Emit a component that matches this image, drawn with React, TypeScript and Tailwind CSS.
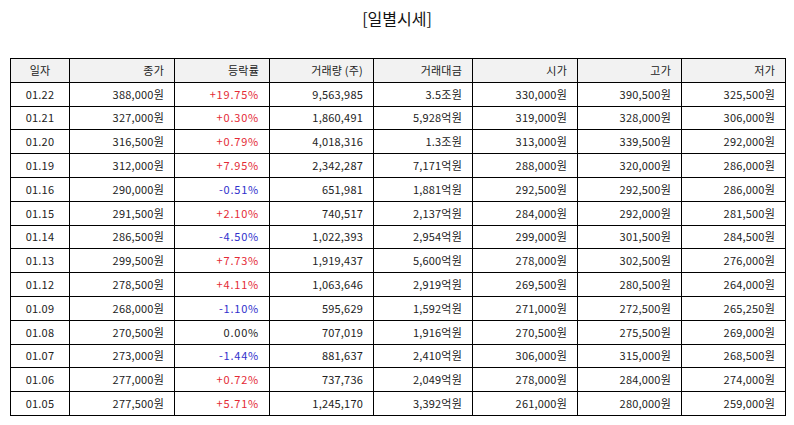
import React from 'react';

type Row = {
  date: string;
  close: string;
  rate: string;
  volume: string;
  amount: string;
  open: string;
  high: string;
  low: string;
};

const rows: Row[] = [
  { date: '01.22', close: '388,000원', rate: '+19.75%', volume: '9,563,985', amount: '3.5조원', open: '330,000원', high: '390,500원', low: '325,500원' },
  { date: '01.21', close: '327,000원', rate: '+0.30%', volume: '1,860,491', amount: '5,928억원', open: '319,000원', high: '328,000원', low: '306,000원' },
  { date: '01.20', close: '316,500원', rate: '+0.79%', volume: '4,018,316', amount: '1.3조원', open: '313,000원', high: '339,500원', low: '292,000원' },
  { date: '01.19', close: '312,000원', rate: '+7.95%', volume: '2,342,287', amount: '7,171억원', open: '288,000원', high: '320,000원', low: '286,000원' },
  { date: '01.16', close: '290,000원', rate: '-0.51%', volume: '651,981', amount: '1,881억원', open: '292,500원', high: '292,500원', low: '286,000원' },
  { date: '01.15', close: '291,500원', rate: '+2.10%', volume: '740,517', amount: '2,137억원', open: '284,000원', high: '292,000원', low: '281,500원' },
  { date: '01.14', close: '286,500원', rate: '-4.50%', volume: '1,022,393', amount: '2,954억원', open: '299,000원', high: '301,500원', low: '284,500원' },
  { date: '01.13', close: '299,500원', rate: '+7.73%', volume: '1,919,437', amount: '5,600억원', open: '278,000원', high: '302,500원', low: '276,000원' },
  { date: '01.12', close: '278,500원', rate: '+4.11%', volume: '1,063,646', amount: '2,919억원', open: '269,500원', high: '280,500원', low: '264,000원' },
  { date: '01.09', close: '268,000원', rate: '-1.10%', volume: '595,629', amount: '1,592억원', open: '271,000원', high: '272,500원', low: '265,250원' },
  { date: '01.08', close: '270,500원', rate: '0.00%', volume: '707,019', amount: '1,916억원', open: '270,500원', high: '275,500원', low: '269,000원' },
  { date: '01.07', close: '273,000원', rate: '-1.44%', volume: '881,637', amount: '2,410억원', open: '306,000원', high: '315,000원', low: '268,500원' },
  { date: '01.06', close: '277,000원', rate: '+0.72%', volume: '737,736', amount: '2,049억원', open: '278,000원', high: '284,000원', low: '274,000원' },
  { date: '01.05', close: '277,500원', rate: '+5.71%', volume: '1,245,170', amount: '3,392억원', open: '261,000원', high: '280,000원', low: '259,000원' },
];

const rateColor = (rate: string) => {
  if (rate.startsWith('+')) return 'text-[#e42a36]';
  if (rate.startsWith('-')) return 'text-[#3030cc]';
  return 'text-[#222]';
};

const cell = 'border-[1.5px] border-black h-[23.8px] py-0 px-[10px] text-right tracking-[0.2px]';

const App: React.FC = () => {
  return (
    <div
      className="w-[794px] h-[425px] bg-white text-[#222] overflow-hidden"
      style={{ fontFamily: '"Noto Sans CJK KR", "Noto Sans", sans-serif' }}
    >
      {/* Title */}
      <h1 className="text-center text-[16px] leading-[20px] pt-[8px] h-[58px] text-[#111]">[일별시세]</h1>

      {/* Daily price table */}
      <table className="ml-[10px] w-[775px] border-collapse table-fixed text-[11px] leading-none">
        <colgroup>
          <col className="w-[59px]" />
          <col className="w-[105px]" />
          <col className="w-[95px]" />
          <col className="w-[104px]" />
          <col className="w-[99px]" />
          <col className="w-[105px]" />
          <col className="w-[104px]" />
          <col className="w-[104px]" />
        </colgroup>
        <thead>
          <tr className="bg-[#f2f2f2]">
            <th className={`${cell} !text-center font-normal`}>일자</th>
            <th className={`${cell} font-normal`}>종가</th>
            <th className={`${cell} font-normal`}>등락률</th>
            <th className={`${cell} font-normal`}>거래량 (주)</th>
            <th className={`${cell} font-normal`}>거래대금</th>
            <th className={`${cell} font-normal`}>시가</th>
            <th className={`${cell} font-normal`}>고가</th>
            <th className={`${cell} font-normal`}>저가</th>
          </tr>
        </thead>
        <tbody>
          {rows.map((r) => (
            <tr key={r.date}>
              <td className={`${cell} !text-center`}>{r.date}</td>
              <td className={cell}>{r.close}</td>
              <td className={`${cell} !tracking-[0.8px] ${rateColor(r.rate)}`}>{r.rate}</td>
              <td className={cell}>{r.volume}</td>
              <td className={cell}>{r.amount}</td>
              <td className={cell}>{r.open}</td>
              <td className={cell}>{r.high}</td>
              <td className={cell}>{r.low}</td>
            </tr>
          ))}
        </tbody>
      </table>
    </div>
  );
};

export default App;
